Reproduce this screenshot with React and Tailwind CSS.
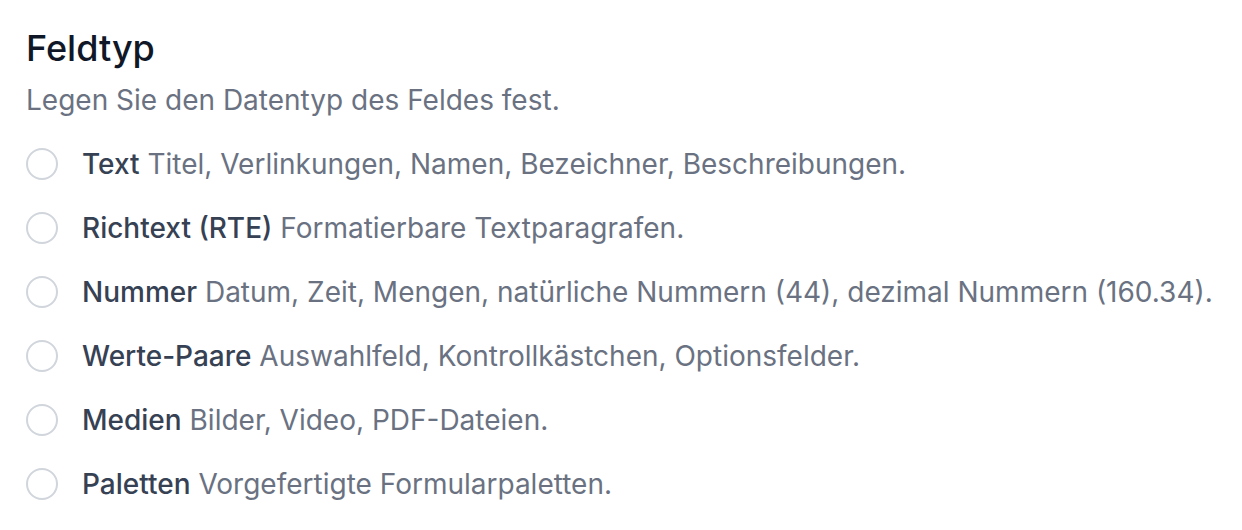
const options = [
  { id: "text", label: "Text", desc: "Titel, Verlinkungen, Namen, Bezeichner, Beschreibungen." },
  { id: "rte", label: "Richtext (RTE)", desc: "Formatierbare Textparagrafen." },
  { id: "number", label: "Nummer", desc: "Datum, Zeit, Mengen, natürliche Nummern (44), dezimal Nummern (160.34)." },
  { id: "pairs", label: "Werte-Paare", desc: "Auswahlfeld, Kontrollkästchen, Optionsfelder." },
  { id: "media", label: "Medien", desc: "Bilder, Video, PDF-Dateien." },
  { id: "palettes", label: "Paletten", desc: "Vorgefertigte Formularpaletten." },
];

export default function App() {
  return (
    <div className="min-h-[530px] bg-white px-[26px] pt-6 font-['Inter',sans-serif]">
      <h3 className="text-[36px] leading-[48px] font-medium text-gray-900">Feldtyp</h3>
      <p className="mt-2 text-[28px] leading-[40px] text-gray-500">Legen Sie den Datentyp des Feldes fest.</p>
      <fieldset className="mt-6">
        <div className="flex flex-col gap-6">
          {options.map((o) => (
            <div key={o.id} className="flex h-10 items-center">
              <input
                id={o.id}
                name="field-type"
                type="radio"
                className="h-8 w-8 shrink-0 appearance-none rounded-full border-2 border-gray-300 bg-white"
              />
              <label htmlFor={o.id} className="ml-6 text-[28px] leading-[40px] text-gray-500">
                <span className="font-medium text-gray-700">{o.label}</span> {o.desc}
              </label>
            </div>
          ))}
        </div>
      </fieldset>
    </div>
  );
}
